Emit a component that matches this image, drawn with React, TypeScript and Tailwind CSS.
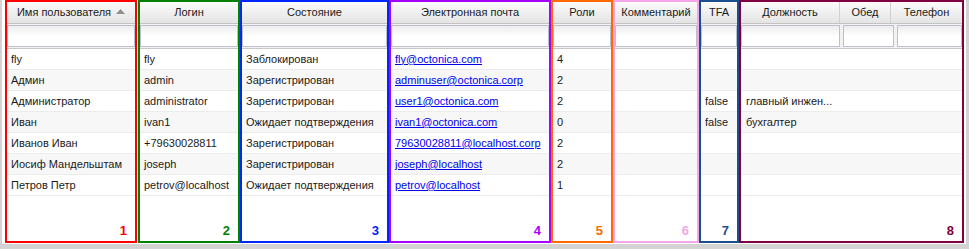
import React from 'react';

type User = {
  name: string;
  login: string;
  state: string;
  email: string;
  roles: string;
  tfa?: string;
  position?: string;
};

const users: User[] = [
  { name: 'fly', login: 'fly', state: 'Заблокирован', email: 'fly@octonica.com', roles: '4' },
  { name: 'Админ', login: 'admin', state: 'Зарегистрирован', email: 'adminuser@octonica.corp', roles: '2' },
  { name: 'Администратор', login: 'administrator', state: 'Зарегистрирован', email: 'user1@octonica.com', roles: '2', tfa: 'false', position: 'главный инжен...' },
  { name: 'Иван', login: 'ivan1', state: 'Ожидает подтверждения', email: 'ivan1@octonica.com', roles: '0', tfa: 'false', position: 'бухгалтер' },
  { name: 'Иванов Иван', login: '+79630028811', state: 'Зарегистрирован', email: '79630028811@localhost.corp', roles: '2' },
  { name: 'Иосиф Мандельштам', login: 'joseph', state: 'Зарегистрирован', email: 'joseph@localhost', roles: '2' },
  { name: 'Петров Петр', login: 'petrov@localhost', state: 'Ожидает подтверждения', email: 'petrov@localhost', roles: '1' },
];

type Head = { label: string; w?: string; sorted?: boolean };

const SortArrow = () => (
  <svg width="9" height="5" viewBox="0 0 9 5" className="ml-[5px] mb-[2px]">
    <path d="M0 5 L4.5 0 L9 5 Z" fill="#8f8f8f" />
  </svg>
);

const Label = ({ n, c }: { n: string; c: string }) => (
  <span className={`font-['Liberation_Sans',sans-serif] font-bold text-[13px] leading-none ${c}`}>{n}</span>
);

// колонка (или группа колонок) в цветной рамке
const Box = ({
  box,
  n,
  c,
  heads,
  cell,
}: {
  box: string;
  n: string;
  c: string;
  heads: Head[];
  cell: (u: User) => React.ReactNode;
}) => (
  <div className={`flex flex-col flex-none h-[243px] border-2 ${box}`}>
    {/* шапка */}
    <div className="flex h-[22px] flex-none border-b border-[#c3c3c3] bg-linear-to-b from-[#fbfbfb] to-[#e4e4e4]">
      {heads.map((h, i) => (
        <div
          key={i}
          className={`flex items-center justify-center text-[#1a1a1a] whitespace-nowrap ${h.w ?? 'flex-1'} ${
            i < heads.length - 1 ? 'border-r border-[#d0d0d0]' : ''
          }`}
        >
          {h.label}
          {h.sorted && <SortArrow />}
        </div>
      ))}
    </div>

    {/* фильтры */}
    <div className="flex h-[25px] flex-none gap-[3px] py-[1px] bg-[#f2f2f2] border-b border-[#c8c8c8]">
      {heads.map((h, i) => (
        <div
          key={i}
          className={`border border-[#bcbfcc] bg-linear-to-b from-[#ececec] via-white to-white ${h.w ?? 'flex-1'}`}
        />
      ))}
    </div>

    {/* строки */}
    {users.map((u, i) => (
      <div
        key={i}
        className={`flex h-[21px] flex-none items-center px-[4px] border-b border-[#ececec] whitespace-nowrap overflow-hidden text-[#1a1a1a] ${
          i % 2 === 1 ? 'bg-[#f7f7f7]' : 'bg-white'
        }`}
      >
        {cell(u)}
      </div>
    ))}

    <div className="flex flex-1 items-end justify-end pr-[8px] pb-[4px] bg-white">
      <Label n={n} c={c} />
    </div>
  </div>
);

export default function App() {
  return (
    <div className="w-[969px] h-[249px] bg-white border-l-2 border-r-[3px] border-b-[5px] border-[#d3d3d3] pl-[3px] font-['Liberation_Sans',sans-serif] text-[11px]">
      <div className="flex">
        <Box
          box="w-[132px] border-[#ff0000]"
          n="1"
          c="text-[#ff0000]"
          heads={[{ label: 'Имя пользователя', sorted: true }]}
          cell={(u) => u.name}
        />
        <div className="w-[1px] flex-none" />
        <Box box="w-[102px] border-[#008000]" n="2" c="text-[#008000]" heads={[{ label: 'Логин' }]} cell={(u) => u.login} />
        <Box box="w-[149px] border-[#0026ff]" n="3" c="text-[#0026ff]" heads={[{ label: 'Состояние' }]} cell={(u) => u.state} />
        <Box
          box="w-[162px] border-[#a600ff]"
          n="4"
          c="text-[#a600ff]"
          heads={[{ label: 'Электронная почта' }]}
          cell={(u) => <span className="text-[#0000ee] underline">{u.email}</span>}
        />
        <Box box="w-[62px] border-[#ff6a00]" n="5" c="text-[#ff6a00]" heads={[{ label: 'Роли' }]} cell={(u) => u.roles} />
        <Box box="w-[86px] border-[#f4a6e8]" n="6" c="text-[#f4a6e8]" heads={[{ label: 'Комментарий' }]} cell={() => ''} />
        <Box box="w-[40px] border-[#1a4f8f]" n="7" c="text-[#1a4f8f]" heads={[{ label: 'TFA' }]} cell={(u) => u.tfa ?? ''} />
        <Box
          box="w-[225px] border-[#800040]"
          n="8"
          c="text-[#800040]"
          heads={[
            { label: 'Должность', w: 'w-[99px]' },
            { label: 'Обед', w: 'w-[51px]' },
            { label: 'Телефон' },
          ]}
          cell={(u) => <span className="pl-[1px]">{u.position ?? ''}</span>}
        />
      </div>
    </div>
  );
}
